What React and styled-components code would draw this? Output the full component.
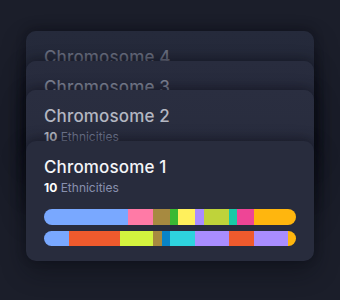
import React from "react";
import styled, { createGlobalStyle } from "styled-components";

const Global = createGlobalStyle`
  html, body { margin: 0; padding: 0; background: #1b1e2a; }
  body { font-family: Inter, "Noto Sans", sans-serif; -webkit-font-smoothing: antialiased; }
`;

const Page = styled.div`
  width: 340px;
  height: 300px;
  box-sizing: border-box;
  padding: 31px 26px 0 26px;
  background: #1b1e2a;
  overflow: hidden;
`;

const Stack = styled.div`
  display: flex;
  flex-direction: column;
`;

const Card = styled.div`
  position: relative;
  box-sizing: border-box;
  height: 120px;
  margin-top: ${(p) => p.$overlap}px;
  padding: 15px 18px 14px 18px;
  border-radius: 10px;
  background: ${(p) => p.$bg};
  box-shadow: 0 -2px 10px rgba(8, 10, 18, 0.35), 0 10px 24px rgba(8, 10, 18, 0.45);
  display: flex;
  flex-direction: column;
`;

const Title = styled.div`
  font-size: 17px;
  line-height: 22px;
  font-weight: 500;
  color: ${(p) => p.$color};
  letter-spacing: 0.15px;
`;

const Sub = styled.div`
  margin-top: 2px;
  font-size: 12px;
  line-height: 16px;
  color: ${(p) => p.$color};
  visibility: ${(p) => (p.$hidden ? "hidden" : "visible")};
`;

const Count = styled.span`
  font-weight: 700;
  color: ${(p) => p.$color};
`;

const Bars = styled.div`
  margin-top: 13px;
  display: flex;
  flex-direction: column;
  gap: 6px;
  visibility: ${(p) => (p.$hidden ? "hidden" : "visible")};
`;

const Bar = styled.div`
  display: flex;
  height: ${(p) => p.$h}px;
  border-radius: 8px;
  overflow: hidden;
`;

const Seg = styled.div`
  flex: ${(p) => p.$units} 0 0;
  background: ${(p) => p.$color};
`;

const C = {
  blue: "#79a8ff",
  pink: "#ff7aa6",
  olive: "#a78a40",
  green: "#3bb933",
  yellow: "#fff05c",
  lav: "#a98dff",
  yg: "#bfd33a",
  teal: "#19c9a7",
  mag: "#ee4596",
  amber: "#ffb60e",
  red: "#ef5a2d",
  lime: "#d3f33e",
  deep: "#0884c7",
  cyan: "#2ed3de",
};

const bar1 = [
  ["blue", 10], ["pink", 3], ["olive", 2], ["green", 1], ["yellow", 2],
  ["lav", 1], ["yg", 3], ["teal", 1], ["mag", 2], ["amber", 5],
];
const bar2 = [
  ["blue", 3], ["red", 6], ["lime", 4], ["olive", 1], ["deep", 1],
  ["cyan", 3], ["lav", 4], ["red", 3], ["lav", 4], ["amber", 1],
];

const cards = [
  { n: 4, overlap: 0, bg: "linear-gradient(180deg,#252a3b 0%,#222636 100%)", title: "#686d7e", sub: "#5a6075", count: "#686d7e", hideSub: true, hideBars: true },
  { n: 3, overlap: -90, bg: "linear-gradient(180deg,#282c3e 0%,#242839 100%)", title: "#7c8192", sub: "#5e6479", count: "#7c8192", hideSub: true, hideBars: true },
  { n: 2, overlap: -91, bg: "linear-gradient(180deg,#2a2e40 0%,#262a3b 100%)", title: "#b4b7c2", sub: "#6f768e", count: "#b4b7c2", hideSub: false, hideBars: true },
  { n: 1, overlap: -69, bg: "#282c3d", title: "#f4f5f8", sub: "#8890ae", count: "#ffffff", hideSub: false, hideBars: false },
];

const SegBar = ({ data, h }) => (
  <Bar $h={h}>
    {data.map(([c, u], i) => (
      <Seg key={i} $units={u} $color={C[c]} />
    ))}
  </Bar>
);

export default function App() {
  return (
    <>
      <Global />
      <Page>
        <Stack>
          {cards.map((c) => (
            <Card key={c.n} $overlap={c.overlap} $bg={c.bg}>
              <Title $color={c.title}>Chromosome {c.n}</Title>
              <Sub $color={c.sub} $hidden={c.hideSub}>
                <Count $color={c.count}>10</Count> Ethnicities
              </Sub>
              <Bars $hidden={c.hideBars}>
                <SegBar data={bar1} h={16} />
                <SegBar data={bar2} h={15} />
              </Bars>
            </Card>
          ))}
        </Stack>
      </Page>
    </>
  );
}
